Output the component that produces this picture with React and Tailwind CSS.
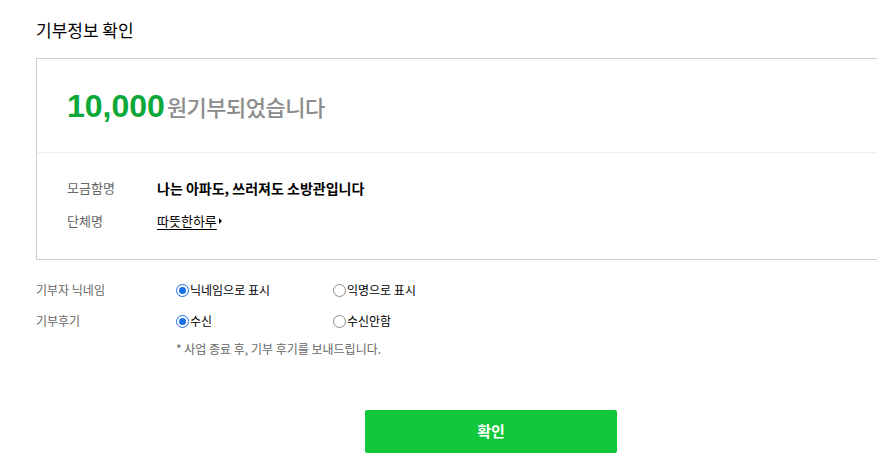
import React from "react";

const KR = { fontFamily: '"Noto Sans CJK KR", "Noto Sans", sans-serif' };

function Radio({ checked, label }) {
  return (
    <label className="flex items-center text-[12px] text-black leading-none">
      {checked ? (
        <span className="w-[13px] h-[13px] rounded-full border-[1.5px] border-[#1a6fe8] flex items-center justify-center">
          <span className="w-[7px] h-[7px] rounded-full bg-[#1a6fe8]" />
        </span>
      ) : (
        <span className="w-[13px] h-[13px] rounded-full border-[1.5px] border-[#8a8a8a]" />
      )}
      <span className="ml-[1px]">{label}</span>
    </label>
  );
}

export default function App() {
  return (
    <div className="w-[877px] h-[475px] overflow-hidden bg-white" style={KR}>
      <div className="pl-[36px] w-[946px]">
        <h1 className="mt-[18px] text-[17px] leading-[24px] text-black font-normal">기부정보 확인</h1>
        <div className="mt-[16px] border border-[#cccccc]">
          <div className="h-[94px] flex items-center pl-[30px] border-b border-[#eeeeee]">
            <span
              className="text-[32px] font-bold text-[#0ca83a] leading-none"
              style={{ fontFamily: '"Liberation Sans", Arial, sans-serif' }}
            >
              10,000
            </span>
            <span className="ml-[2px] text-[22px] font-medium text-[#8c8c8c] leading-none tracking-[-0.5px]">
              원기부되었습니다
            </span>
          </div>
          <div className="pt-[25px] pb-[28px] pl-[30px] flex flex-col gap-[13px]">
            <div className="flex items-center h-[20px]">
              <span className="w-[90px] text-[13px] text-[#666666]">모금함명</span>
              <span className="text-[14px] font-bold text-black">나는 아파도, 쓰러져도 소방관입니다</span>
            </div>
            <div className="flex items-center h-[20px]">
              <span className="w-[90px] text-[13px] text-[#666666]">단체명</span>
              <span className="flex items-center text-[13px] text-black">
                <span className="underline underline-offset-[3px]">따뜻한하루</span>
                <span className="ml-[2px] w-0 h-0 border-y-[3px] border-y-transparent border-l-[3px] border-l-black" />
              </span>
            </div>
          </div>
        </div>
        <div className="mt-[20px] flex flex-col">
          <div className="flex items-center h-[20px]">
            <span className="w-[140px] text-[12px] text-[#666666]">기부자 닉네임</span>
            <div className="w-[157px]"><Radio checked label="닉네임으로 표시" /></div>
            <Radio label="익명으로 표시" />
          </div>
          <div className="flex items-center h-[20px] mt-[11px]">
            <span className="w-[140px] text-[12px] text-[#666666]">기부후기</span>
            <div className="w-[157px]"><Radio checked label="수신" /></div>
            <Radio label="수신안함" />
          </div>
          <div className="pl-[140px] mt-[8px] text-[12px] text-[#666666] leading-[20px]">
            * 사업 종료 후, 기부 후기를 보내드립니다.
          </div>
        </div>
        <div className="w-[910px] flex justify-center mt-[51px]">
          <button className="w-[252px] h-[43px] rounded-[2px] bg-[#12c83a] text-white text-[15px] font-bold">
            확인
          </button>
        </div>
      </div>
    </div>
  );
}
